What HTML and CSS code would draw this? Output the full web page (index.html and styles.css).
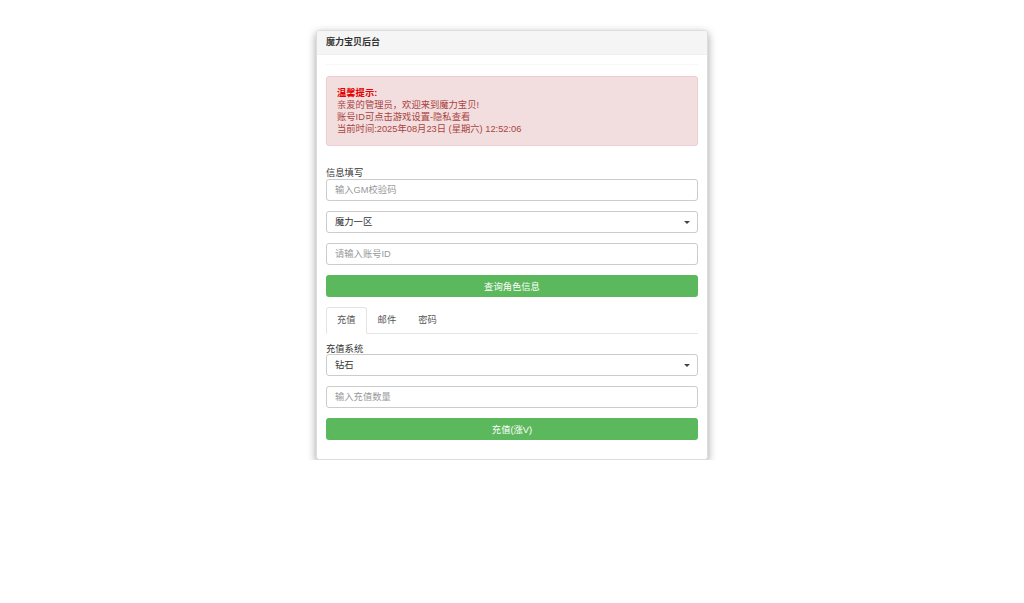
FILE: index.html
```html
<!DOCTYPE html>
<html lang="zh-CN">

<head>
    <meta charset="UTF-8">
    <meta name="viewport" content="width=device-width, initial-scale=1.0">
    <title>魔力宝贝后台</title>
    <link rel="stylesheet" href="styles.css">
</head>

<body>
    <div class="panel">
        <div class="panel-heading">魔力宝贝后台</div>
        <div class="panel-body">
            <div class="divider"></div>
            <div class="alert">
                <strong>温馨提示:</strong><br>
                亲爱的管理员，欢迎来到魔力宝贝!<br>
                账号ID可点击游戏设置-隐私查看<br>
                当前时间:2025年08月23日 (星期六) 12:52:06
            </div>

            <form class="form" action="#" method="POST">
                <label class="label" for="gm">信息填写</label>
                <input class="control" type="text" id="gm" placeholder="输入GM校验码">
                <div class="select-wrap">
                    <select class="control">
                        <option>魔力一区</option>
                    </select>
                </div>
                <input class="control" type="text" placeholder="请输入账号ID">
                <button class="btn" type="button">查询角色信息</button>
            </form>

            <ul class="tabs">
                <li class="tab active">充值</li>
                <li class="tab">邮件</li>
                <li class="tab">密码</li>
            </ul>

            <form class="form" action="#" method="POST">
                <label class="label label-tab">充值系统</label>
                <div class="select-wrap">
                    <select class="control">
                        <option>钻石</option>
                    </select>
                </div>
                <input class="control" type="text" placeholder="输入充值数量">
                <button class="btn" type="button">充值(涨V)</button>
            </form>
        </div>
    </div>
</body>

</html>
```

FILE: styles.css
```css
body {
    margin: 0;
    background: #fff;
    font-family: "Liberation Sans", "Noto Sans CJK SC", sans-serif;
    font-size: 9.3px;
    color: #333;
}

.panel {
    width: 390px;
    margin: 30px auto 0;
    background: #fff;
    border: 1px solid #ddd;
    border-radius: 3px;
    box-shadow: 0 3px 8px rgba(0, 0, 0, 0.38);
}

.panel-heading {
    height: 23px;
    line-height: 23px;
    padding: 0 9px;
    background: #f5f5f5;
    border-bottom: 1px solid #f0f0f0;
    font-weight: bold;
    font-size: 9px;
    color: #333;
}

.panel-body {
    padding: 9px 9px 19px;
}

.divider {
    height: 1px;
    background: #f7f7f7;
}

.alert {
    margin-top: 11px;
    padding: 9.5px 10px;
    background: #f2dede;
    border: 1px solid #ebccd1;
    border-radius: 3px;
    color: #a94442;
    line-height: 12.3px;
}

.alert strong {
    color: #e60000;
}

.form {
    display: flex;
    flex-direction: column;
    gap: 10px;
    margin: 0;
}

.label {
    margin-top: 21px;
    margin-bottom: -10px;
    line-height: 12px;
    color: #333;
}

.label-tab {
    margin-top: 9px;
    margin-bottom: -11px;
}

.control {
    box-sizing: border-box;
    width: 100%;
    height: 22px;
    margin: 0;
    padding: 0 8px;
    border: 1px solid #ccc;
    border-radius: 3px;
    background: #fff;
    font: inherit;
    color: #333;
    outline: none;
    appearance: none;
    -webkit-appearance: none;
}

.control::placeholder {
    color: #999;
}

.select-wrap {
    position: relative;
}

.select-wrap::after {
    content: "";
    position: absolute;
    right: 8px;
    top: 10px;
    border-left: 3px solid transparent;
    border-right: 3px solid transparent;
    border-top: 3px solid #444;
    pointer-events: none;
}

.btn {
    height: 22px;
    border: none;
    border-radius: 3px;
    background: #5cb85c;
    color: #fff;
    font: inherit;
    cursor: pointer;
}

.tabs {
    display: flex;
    list-style: none;
    margin: 10px 0 0;
    padding: 0;
    border-bottom: 1px solid #e4e4e4;
}

.tab {
    height: 25px;
    line-height: 25px;
    padding: 0 10px;
    margin-bottom: -1px;
    border: 1px solid transparent;
    border-radius: 3px 3px 0 0;
    color: #555;
}

.tab.active {
    border-color: #e4e4e4;
    border-bottom-color: #fff;
    background: #fff;
}
```
